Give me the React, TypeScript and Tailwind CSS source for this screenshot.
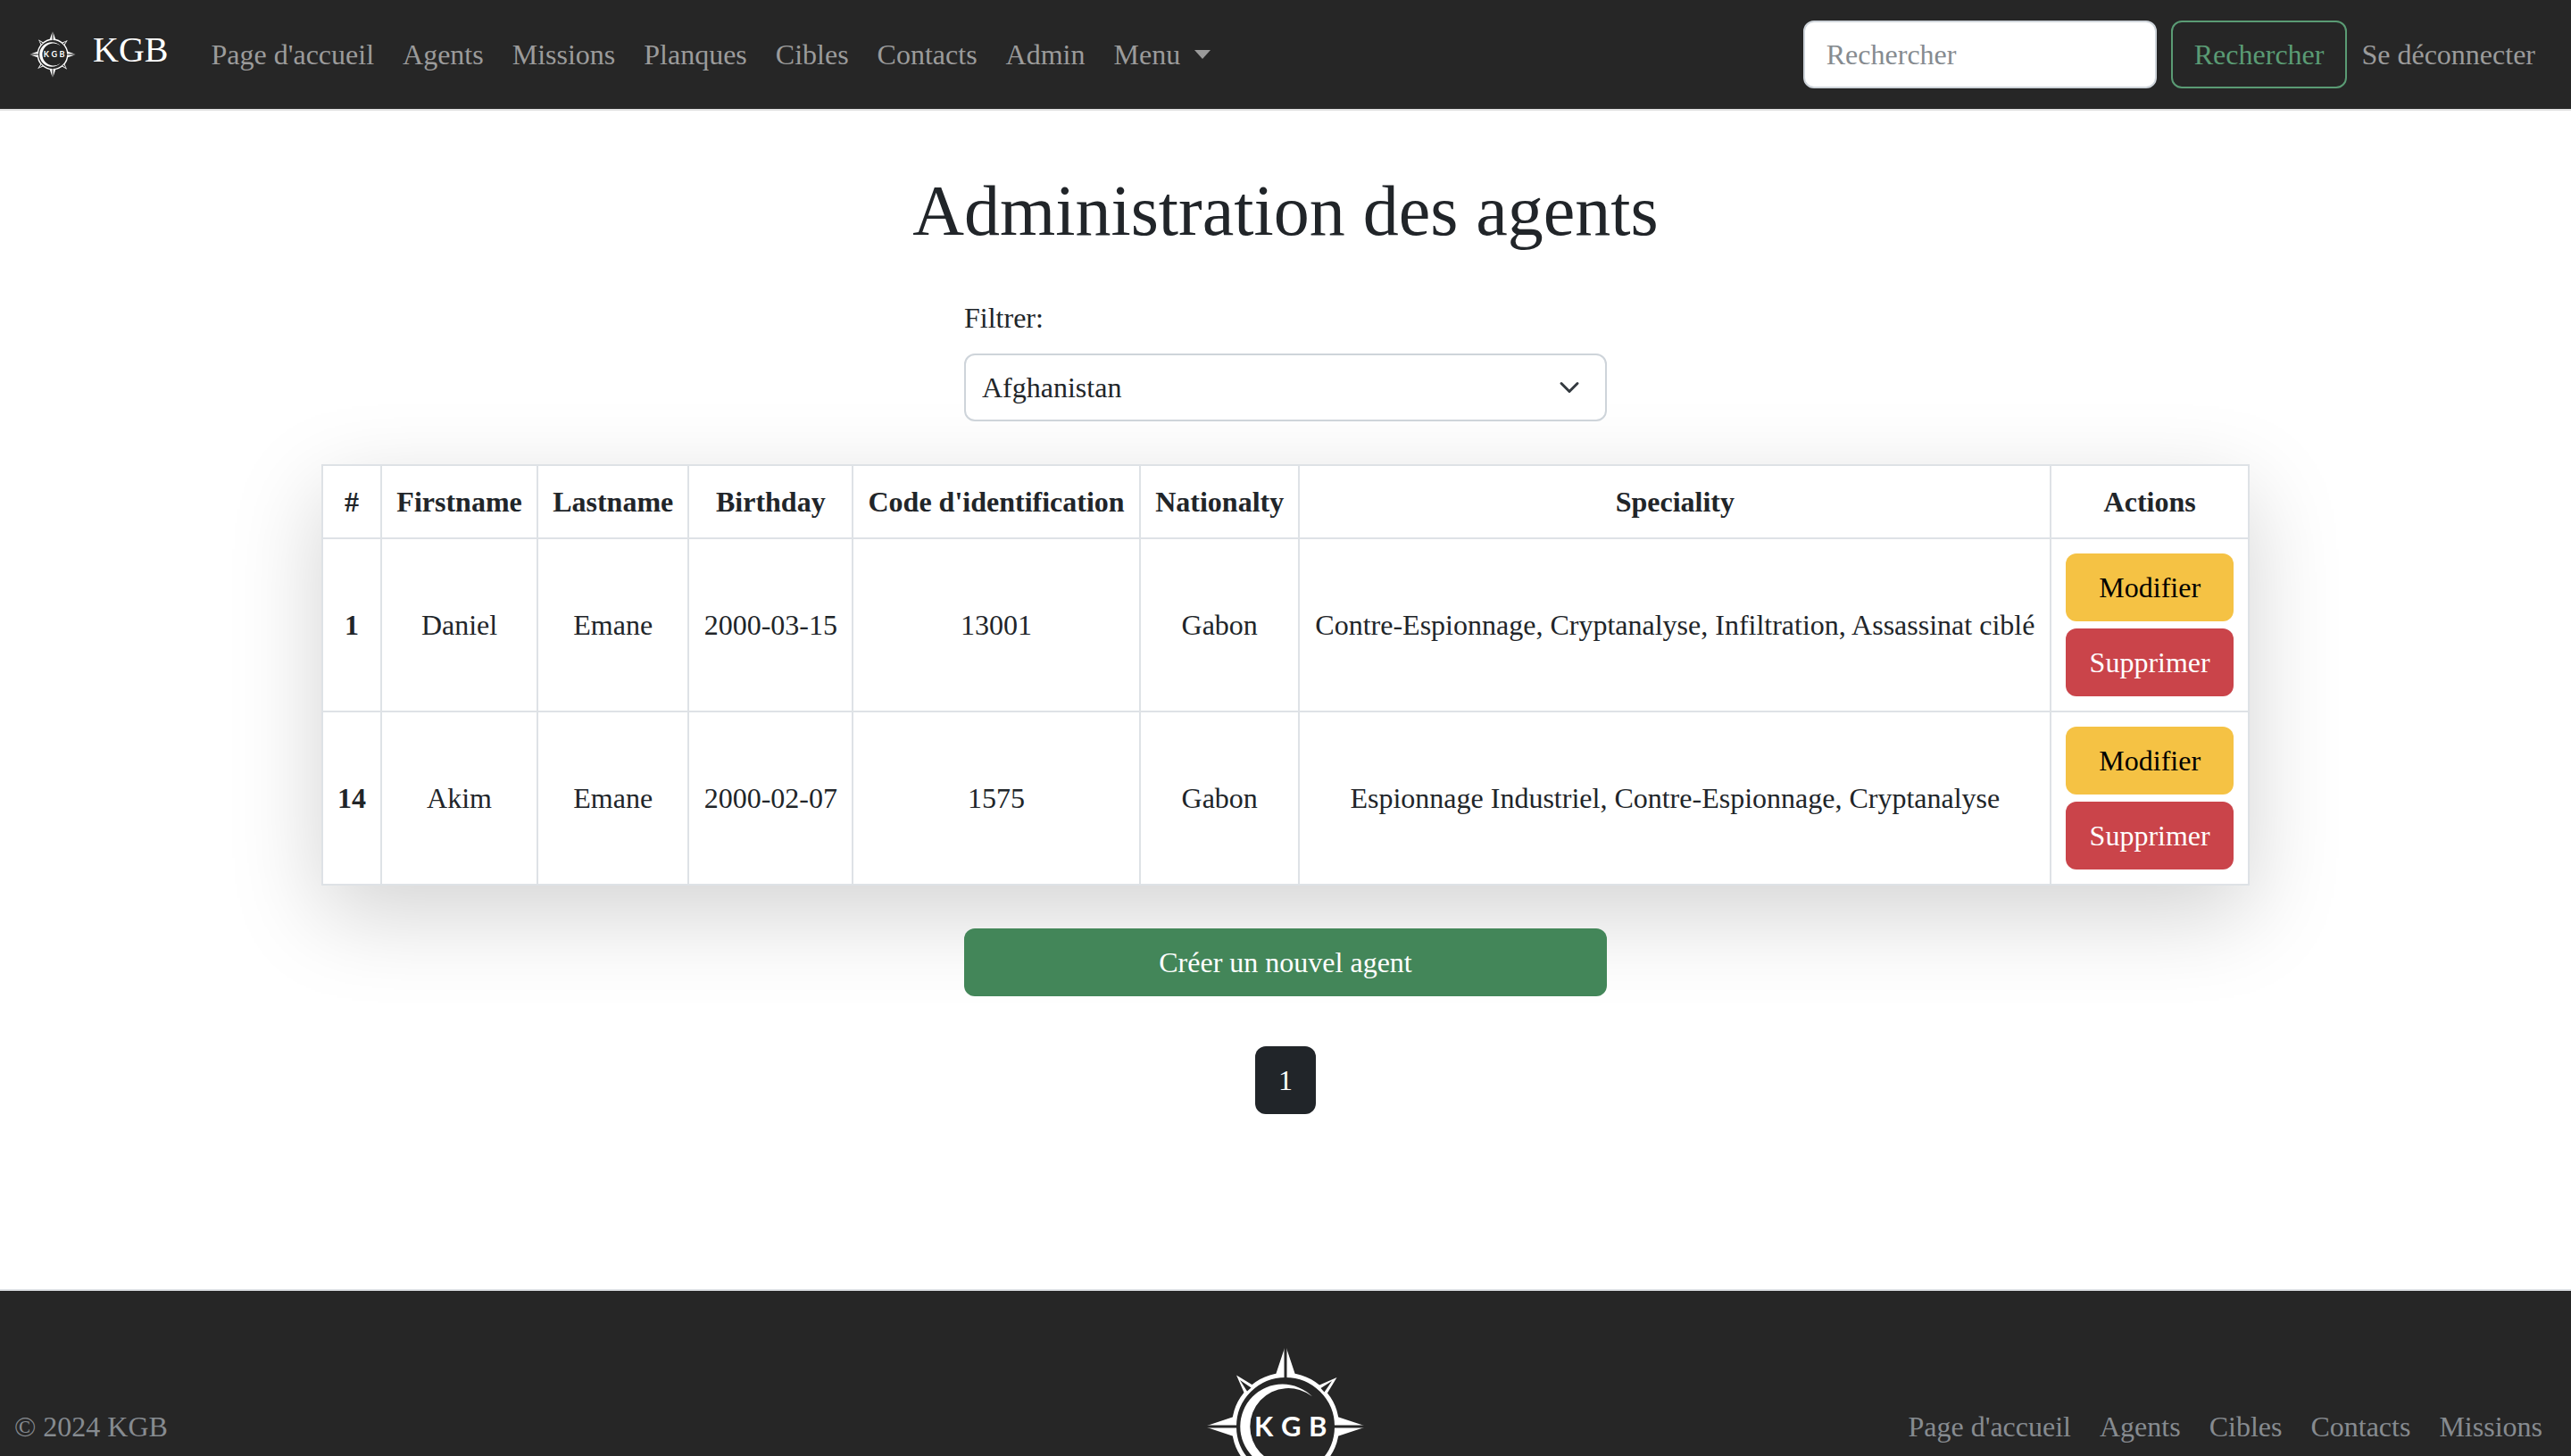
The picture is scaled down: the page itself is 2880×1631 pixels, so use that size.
import React from "react";

const navLinks = ["Page d'accueil", "Agents", "Missions", "Planques", "Cibles", "Contacts", "Admin"];
const footerLinks = ["Page d'accueil", "Agents", "Cibles", "Contacts", "Missions"];
const headers = [
  "#",
  "Firstname",
  "Lastname",
  "Birthday",
  "Code d'identification",
  "Nationalty",
  "Speciality",
  "Actions",
];

const agents = [
  {
    id: 1,
    cells: ["Daniel", "Emane", "2000-03-15", "13001", "Gabon", "Contre-Espionnage, Cryptanalyse, Infiltration, Assassinat ciblé"],
  },
  {
    id: 14,
    cells: ["Akim", "Emane", "2000-02-07", "1575", "Gabon", "Espionnage Industriel, Contre-Espionnage, Cryptanalyse"],
  },
];

function CompassLogo({ className }: { className: string }) {
  return (
    <svg viewBox="-120 -120 240 240" className={className} role="img" aria-label="Logo KGB">
      <circle r="57.5" fill="none" stroke="#fff" strokeWidth="5" />
      {[0, 90, 180, 270].map((angle) => (
        <g key={angle} transform={`rotate(${angle})`}>
          <path d="M-1 -88 L-11 -58 L-1 -57 Z M1 -88 L11 -58 L1 -57 Z" fill="#fff" />
          <path d="M0 -90 V-54" stroke="#262626" strokeWidth="3" />
          <path d="M-55 -57.500 L-36 -46 L-46 -37 Z" fill="#fff" />
          <path d="M-51 -52 L-38.500 -43.500 L-43 -39.500 Z" fill="#262626" />
        </g>
      ))}
      <path d="M30 -33.700 A47.400 47.400 0 1 0 30 33.700 A43 43 0 1 1 30 -33.700 Z" fill="#fff" />
      <text x="-35 -5 26" y="11" fill="#fff" className="font-[Lato,sans-serif] text-[31px] font-bold">
        KGB
      </text>
    </svg>
  );
}

export default function App() {
  return (
    <div className="min-h-screen bg-white font-['Liberation_Serif',serif] text-[32px] leading-[48px] text-[#212529]">
      <header className="flex items-center border-b-2 border-[#e0e0e0] bg-[#262626] px-6 py-[23px] text-[#9b9b9b]">
        <a href="#" className="mr-8 flex items-start gap-[10px] text-[40px] leading-[60px] text-white">
          <CompassLogo className="size-[70px]" />
          KGB
        </a>
        <nav className="flex flex-1 items-center">
          {navLinks.map((label) => (
            <a key={label} href="#" className="px-4">
              {label}
            </a>
          ))}
          <button type="button" className="flex items-center gap-4 px-4">
            Menu
            <svg viewBox="0 0 20 10" className="h-[10px] w-[18px]" preserveAspectRatio="none" aria-hidden="true">
              <path d="M0 0H20L10 10Z" fill="currentColor" />
            </svg>
          </button>
        </nav>
        <form className="flex items-center gap-4" onSubmit={(e) => e.preventDefault()}>
          <input
            type="search"
            aria-label="Rechercher"
            placeholder="Rechercher"
            className="h-[76px] w-[396px] rounded-xl border-2 border-[#ced4da] bg-white px-6 text-[#212529] placeholder:text-[#868b90]"
          />
          <button type="submit" className="rounded-xl border-2 border-[#5a9b74] px-6 py-3 text-[#5a9b74]">
            Rechercher
          </button>
        </form>
        <a href="#" className="px-4">
          Se déconnecter
        </a>
      </header>

      <main className="flex flex-col items-center pt-16 pb-[196px]">
        <h1 className="text-[80px] leading-[96px]">Administration des agents</h1>

        <form className="mt-12 w-1/4">
          <label htmlFor="country" className="block">
            Filtrer:
          </label>
          <div className="relative mt-4">
            <select
              id="country"
              className="block h-[76px] w-full appearance-none rounded-xl border-2 border-[#ced4da] bg-white pr-16 pl-[18px]"
            >
              <option>Afghanistan</option>
            </select>
            <svg
              viewBox="0 0 16 16"
              className="pointer-events-none absolute top-[26px] right-[30px] size-6"
              fill="none"
              stroke="#343a40"
              strokeWidth="2"
              strokeLinecap="round"
              strokeLinejoin="round"
              aria-hidden="true"
            >
              <path d="m2 5 6 6 6-6" />
            </svg>
          </div>
        </form>

        <table className="mt-12 w-3/4 border-collapse bg-white text-center shadow-[0_32px_96px_rgba(0,0,0,0.175)]">
          <thead>
            <tr>
              {headers.map((label) => (
                <th key={label} scope="col" className="border-2 border-[#dee2e6] p-4 font-bold">
                  {label}
                </th>
              ))}
            </tr>
          </thead>
          <tbody>
            {agents.map((agent) => (
              <tr key={agent.id}>
                <th scope="row" className="border-2 border-[#dee2e6] p-4 font-bold">
                  {agent.id}
                </th>
                {agent.cells.map((value, i) => (
                  <td key={i} className="border-2 border-[#dee2e6] p-4 whitespace-nowrap">
                    {value}
                  </td>
                ))}
                <td className="border-2 border-[#dee2e6] p-4">
                  <div className="flex flex-col gap-2">
                    <button type="button" className="rounded-xl bg-[#f5c244] px-[26px] py-[14px] text-black">
                      Modifier
                    </button>
                    <button type="button" className="rounded-xl bg-[#ca444a] px-[26px] py-[14px] text-white">
                      Supprimer
                    </button>
                  </div>
                </td>
              </tr>
            ))}
          </tbody>
        </table>

        <button type="button" className="relative mt-12 w-1/4 rounded-xl bg-[#438659] py-[14px] text-white">
          Créer un nouvel agent
        </button>
        <button type="button" aria-current="page" className="mt-14 rounded-xl bg-[#212529] px-[26px] py-[14px] text-white">
          1
        </button>
      </main>

      <footer className="grid grid-cols-[1fr_auto_1fr] items-center border-t-2 border-[#dee2e6] bg-[#262626] px-4 py-8 text-[#868b90]">
        <p>© 2024 KGB</p>
        <CompassLogo className="size-60" />
        <nav className="flex justify-end">
          {footerLinks.map((label) => (
            <a key={label} href="#" className="px-4">
              {label}
            </a>
          ))}
        </nav>
      </footer>
    </div>
  );
}
